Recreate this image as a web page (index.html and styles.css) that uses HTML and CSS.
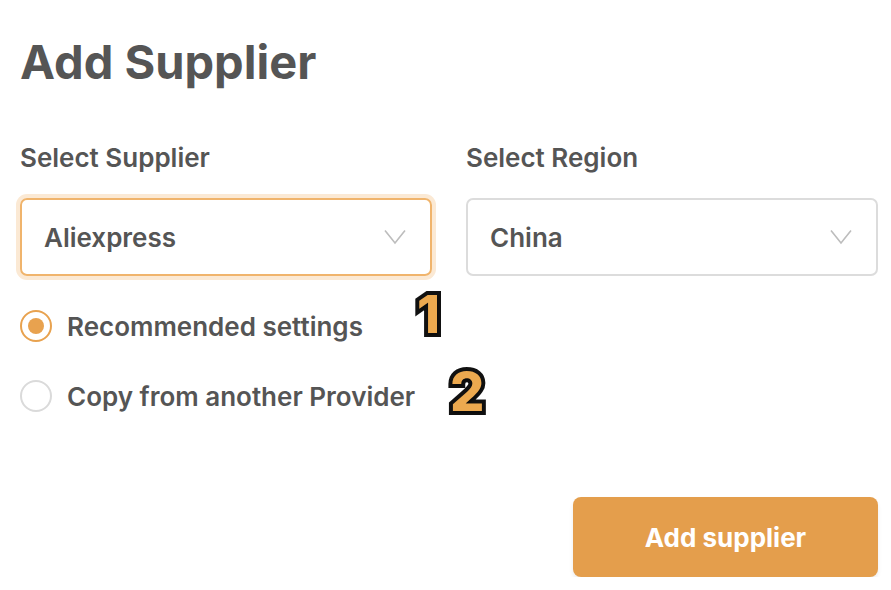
FILE: index.html
```html
<!DOCTYPE html>
<html lang="en">
<head>
    <meta charset="UTF-8">
    <meta name="viewport" content="width=device-width, initial-scale=1.0">
    <title>Add Supplier</title>
    <link rel="stylesheet" href="styles.css">
</head>
<body>

    <div class="container">
        <h1>Add Supplier</h1>

        <div class="fields">
            <div class="field">
                <label>Select Supplier</label>
                <div class="select focused">
                    <span>Aliexpress</span>
                    <svg class="chevron" width="22" height="16" viewBox="0 0 22 16"><path d="M1 1.5 L11 14 L21 1.5" fill="none" stroke="#bdbdbd" stroke-width="1.6"/></svg>
                </div>
            </div>
            <div class="field">
                <label>Select Region</label>
                <div class="select">
                    <span>China</span>
                    <svg class="chevron" width="22" height="16" viewBox="0 0 22 16"><path d="M1 1.5 L11 14 L21 1.5" fill="none" stroke="#bdbdbd" stroke-width="1.6"/></svg>
                </div>
            </div>
        </div>

        <div class="options">
            <div class="option">
                <span class="radio checked"></span>
                <span class="option-label">Recommended settings</span>
                <span class="marker marker-one">1</span>
            </div>
            <div class="option">
                <span class="radio"></span>
                <span class="option-label">Copy from another Provider</span>
                <span class="marker marker-two">2</span>
            </div>
        </div>

        <div class="actions">
            <button>Add supplier</button>
        </div>
    </div>

</body>
</html>
```

FILE: styles.css
```css
body {
    font-family: Inter, "Noto Sans", sans-serif;
    margin: 0;
    color: #555;
    background: #fff;
}
.container {
    padding: 33px 13px 0 20px;
}
h1 {
    font-size: 47px;
    font-weight: 700;
    margin: 0;
    line-height: 58px;
}
.fields {
    display: grid;
    grid-template-columns: 1fr 1fr;
    gap: 34px;
    margin-top: 52px;
}
label {
    display: block;
    font-size: 26px;
    font-weight: 600;
    line-height: 30px;
    margin-bottom: 25px;
}
.select {
    height: 78px;
    box-sizing: border-box;
    border: 2px solid #dcdcdc;
    border-radius: 7px;
    display: flex;
    align-items: center;
    justify-content: space-between;
    padding: 0 24px 0 22px;
    font-size: 26px;
    font-weight: 600;
}
.select.focused {
    border-color: #f0b46c;
    box-shadow: 0 0 0 4px #fbe9d4;
}
.options {
    margin-top: 34px;
    display: flex;
    flex-direction: column;
    gap: 38px;
}
.option {
    position: relative;
    display: flex;
    align-items: center;
    gap: 15px;
    height: 32px;
}
.radio {
    width: 32px;
    height: 32px;
    box-sizing: border-box;
    border: 2px solid #dadada;
    border-radius: 50%;
    display: flex;
    align-items: center;
    justify-content: center;
}
.radio.checked {
    border-color: #e8a24f;
}
.radio.checked::after {
    content: "";
    width: 16px;
    height: 16px;
    border-radius: 50%;
    background: #e8a24f;
}
.option-label {
    font-size: 26px;
    font-weight: 600;
}
.marker {
    position: absolute;
    font-family: Inter, sans-serif;
    font-weight: 800;
    font-size: 52px;
    color: #eca94f;
    -webkit-text-stroke: 8px #111;
    paint-order: stroke fill;
    text-shadow: 1px 2px 2px rgba(0, 0, 0, 0.35);
    line-height: 1;
}
.marker-one {
    left: 397px;
    top: -21px;
}
.marker-two {
    left: 430px;
    top: -15px;
    font-size: 54px;
}
.actions {
    display: flex;
    justify-content: flex-end;
    margin-top: 85px;
}
button {
    width: 305px;
    height: 80px;
    background-color: #e49e4c;
    color: white;
    border: none;
    border-radius: 8px;
    font-family: Inter, sans-serif;
    font-size: 26px;
    font-weight: 700;
    box-shadow: 0 3px 4px rgba(0, 0, 0, 0.08);
    cursor: pointer;
}
```
